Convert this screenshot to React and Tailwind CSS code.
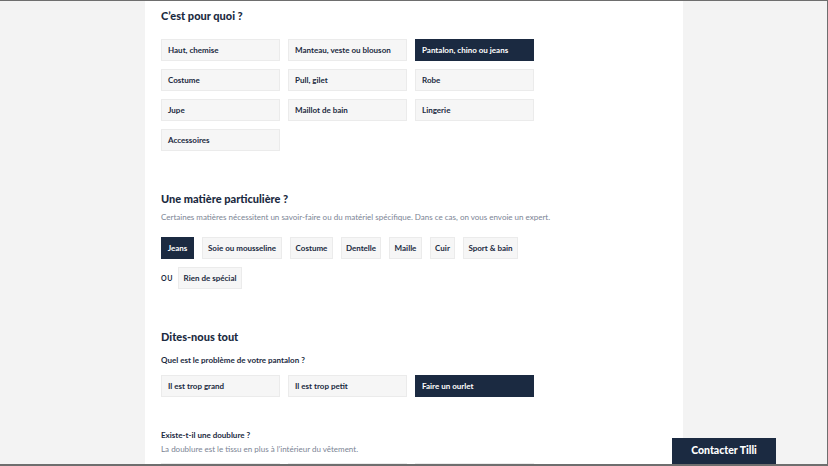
import React, { useState } from 'react';

const FONT = { fontFamily: 'Lato, Inter, "Noto Sans", sans-serif' };

const garments = [
  'Haut, chemise', 'Manteau, veste ou blouson', 'Pantalon, chino ou jeans',
  'Costume', 'Pull, gilet', 'Robe',
  'Jupe', 'Maillot de bain', 'Lingerie',
  'Accessoires',
];

// chip widths follow the label lengths
const fabrics = [
  { label: 'Jeans', w: 'w-[33px]' },
  { label: 'Soie ou mousseline', w: 'w-[80px]' },
  { label: 'Costume', w: 'w-[43px]' },
  { label: 'Dentelle', w: 'w-[40px]' },
  { label: 'Maille', w: 'w-[33px]' },
  { label: 'Cuir', w: 'w-[25px]' },
  { label: 'Sport & bain', w: 'w-[55px]' },
];

const problems = ['Il est trop grand', 'Il est trop petit', 'Faire un ourlet'];

const Choice = ({ label, active, onClick, className = 'w-[119px] px-[6px] text-left' }) => (
  <button
    onClick={onClick}
    className={`h-[22px] border text-[8px] font-bold whitespace-nowrap ${className} ${
      active ? 'bg-[#1b2a41] border-[#1b2a41] text-white' : 'bg-[#f6f6f6] border-[#ebebeb] text-[#1b2a41]'
    }`}
  >
    {label}
  </button>
);

const Heading = ({ children, className = '' }) => (
  <h2 className={`text-[11px] leading-[14px] font-black text-[#1b2a41] ${className}`}>{children}</h2>
);

export default function App() {
  const [garment, setGarment] = useState('Pantalon, chino ou jeans');
  const [fabric, setFabric] = useState('Jeans');
  const [problem, setProblem] = useState('Faire un ourlet');

  return (
    <div style={FONT} className="relative h-[466px] w-[828px] overflow-hidden border-t border-r border-b-2 border-[#6e6e6e] bg-[#f3f3f3] flex">
      <div className="w-[145px] shrink-0" />

      <div className="w-[538px] shrink-0 bg-white pl-[16px] pt-[8px]">
        <Heading>C’est pour quoi ?</Heading>
        <div className="mt-[16px] grid grid-cols-[119px_119px_119px] gap-x-[8px] gap-y-[8px]">
          {garments.map((g) => (
            <Choice key={g} label={g} active={garment === g} onClick={() => setGarment(g)} />
          ))}
        </div>

        <Heading className="mt-[41px]">Une matière particulière ?</Heading>
        <p className="mt-[5px] text-[8px] leading-[12px] text-[#7b8494]">
          Certaines matières nécessitent un savoir-faire ou du matériel spécifique. Dans ce cas, on vous envoie un expert.
        </p>
        <div className="mt-[14px] flex gap-[8px]">
          {fabrics.map((f) => (
            <Choice
              key={f.label}
              label={f.label}
              className={`${f.w} text-center`}
              active={fabric === f.label}
              onClick={() => setFabric(f.label)}
            />
          ))}
        </div>
        <div className="mt-[8px] flex items-center gap-[7px]">
          <span className="w-[10px] text-[7px] font-bold tracking-[0.5px] text-[#1b2a41]">OU</span>
          <Choice
            label="Rien de spécial"
            className="w-[64px] text-center"
            active={fabric === 'Rien'}
            onClick={() => setFabric('Rien')}
          />
        </div>

        <Heading className="mt-[41px]">Dites-nous tout</Heading>
        <p className="mt-[10px] text-[8px] leading-[12px] font-bold text-[#1b2a41]">Quel est le problème de votre pantalon ?</p>
        <div className="mt-[9px] flex gap-[8px]">
          {problems.map((p) => (
            <Choice key={p} label={p} active={problem === p} onClick={() => setProblem(p)} />
          ))}
        </div>

        <p className="mt-[32px] text-[8px] leading-[12px] font-bold text-[#1b2a41]">Existe-t-il une doublure ?</p>
        <p className="mt-[2px] text-[8px] leading-[12px] text-[#7b8494]">La doublure est le tissu en plus à l’intérieur du vêtement.</p>
        <div className="mt-[8px] flex gap-[8px]">
          <div className="h-[22px] w-[119px] border border-[#ebebeb] bg-[#f6f6f6]" />
          <div className="h-[22px] w-[119px] border border-[#ebebeb] bg-[#f6f6f6]" />
          <div className="h-[22px] w-[119px] border border-[#ebebeb] bg-[#f6f6f6]" />
        </div>
      </div>

      <div className="flex-1" />

      <button className="absolute left-[672px] top-[437px] h-[32px] w-[104px] bg-[#1b2a41] pb-[7px] text-[10.5px] font-black text-white">
        Contacter Tilli
      </button>
    </div>
  );
}
